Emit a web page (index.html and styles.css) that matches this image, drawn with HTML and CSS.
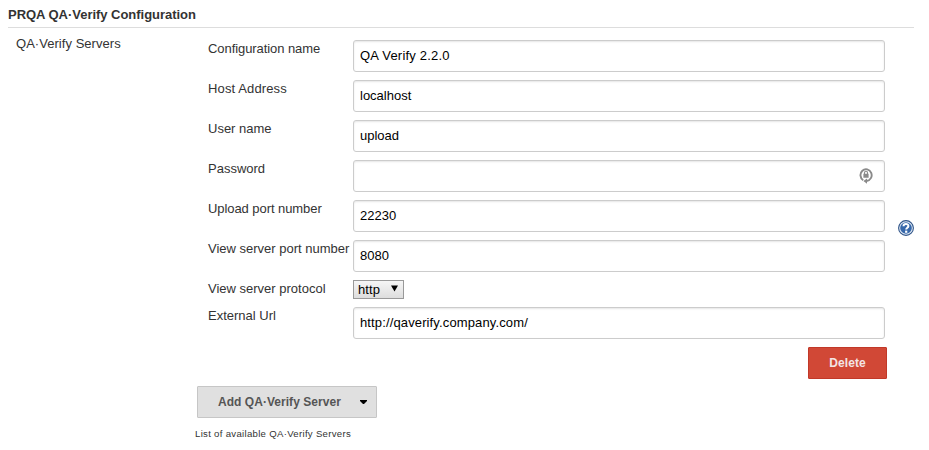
FILE: index.html
```html
<!DOCTYPE html>
<html lang="en">
<head>
<meta charset="utf-8">
<title>PRQA QA·Verify Configuration</title>
<link rel="stylesheet" href="styles.css">
</head>
<body>
<main class="section">
  <h1 class="section-title">PRQA QA·Verify Configuration</h1>
  <div class="section-body">
    <div class="section-label">QA·Verify Servers</div>
    <div class="content">
      <div class="server">
        <form class="fields">
          <label class="row"><span class="name tight">Configuration name</span><input class="field loose" type="text" value="QA Verify 2.2.0"></label>
          <label class="row"><span class="name wide">Host Address</span><input class="field" type="text" value="localhost"></label>
          <label class="row"><span class="name">User name</span><input class="field" type="text" value="upload"></label>
          <label class="row"><span class="name">Password</span><span class="password"><input class="field" type="password">
            <svg class="lock" width="14" height="18" viewBox="0 0 14 18"><path d="M4.2 13.2A5.6 5.9 0 1 1 7.6 14" fill="none" stroke="#8a8a8a" stroke-width="1.9"/><path d="M5.5 7V5.8a1.5 1.5 0 0 1 3 0V7" fill="none" stroke="#8a8a8a" stroke-width="1.1"/><path d="M4.4 6.8h5.2v4H4.4zM8 11.4v5.4l-3.6-2.7z" fill="#8a8a8a"/></svg></span></label>
          <label class="row"><span class="name tight">Upload port number</span><input class="field" type="text" value="22230"></label>
          <label class="row"><span class="name">View server port number</span><input class="field" type="text" value="8080"></label>
          <label class="row row-short"><span class="name">View server protocol</span><span class="select">http<svg width="7" height="7" viewBox="0 0 7 7"><path d="M0 .5h7L3.5 6.5z"/></svg></span></label>
          <label class="row"><span class="name">External Url</span><input class="field wide" type="text" value="http://qaverify.company.com/"></label>
          <button class="delete" type="button">Delete</button>
        </form>
        <svg class="help" width="16" height="16" viewBox="0 0 16 16"><circle cx="8" cy="8" r="7.4" fill="#e4ecf6" stroke="#2f5488" stroke-width="1.1"/><circle cx="8" cy="8" r="5.8" fill="#3768aa"/><path d="M5.5 6.2C5.5 3.2 10.5 3.2 10.4 6.1 10.3 7.7 8.2 7.7 8.2 9.6" fill="none" stroke="#fff" stroke-width="2"/><path d="M7.1 10.6h2.2v2.2H7.1z" fill="#fff"/></svg>
      </div>
      <button class="add" type="button">Add QA·Verify Server<svg width="7" height="4" viewBox="0 0 7 4"><path d="M0 0h7v1L4 4H3L0 1z"/></svg></button>
      <p class="hint">List of available QA·Verify Servers</p>
    </div>
  </div>
</main>
</body>
</html>
```
FILE: styles.css
```css
* { box-sizing: border-box; }
body {
  margin: 0;
  background: #fff;
  color: #333;
  font: 13px/16px "Liberation Sans", Arial, sans-serif;
}
.section { padding: 7px 15px 0 8px; }
.section-title {
  margin: 0;
  height: 21px;
  border-bottom: 1px solid #ddd;
  font-size: 13px;
  line-height: 16px;
  letter-spacing: -.03px;
}
.section-body { display: flex; }
.section-label { width: 187px; padding: 8px 0 0 8px; letter-spacing: .04px; }
.content { flex: 1; }
.server { display: flex; align-items: center; justify-content: space-between; height: 351px; padding: 12px 0 0 13px; }
.fields { width: 679px; height: 339px; display: flex; flex-direction: column; }
.row { display: flex; height: 32px; margin-bottom: 8px; }
.row-short { height: 19px; }
.name { width: 145px; padding-top: 1px; white-space: nowrap; }
.field {
  width: 532px;
  height: 32px;
  padding: 0 6px 2px;
  border: 1px solid #ccc;
  border-radius: 3px;
  background: #fff;
  box-shadow: inset 0 1px 2px rgba(0, 0, 0, .1);
  color: #000;
  font: 13px "Liberation Sans", Arial, sans-serif;
}
.tight { letter-spacing: -.07px; }
.wide { letter-spacing: .13px; }
.loose { letter-spacing: .2px; }
.password { position: relative; }
.lock { position: absolute; top: 7px; right: 12px; }
.select {
  display: flex;
  align-items: center;
  justify-content: space-between;
  width: 51px;
  height: 19px;
  padding: 1px 5px 0 4px;
  border: 1px solid #999;
  background: linear-gradient(#f6f6f6, #ddd);
  color: #000;
  letter-spacing: .1px;
}
.select svg { margin-bottom: 3px; }
.delete, .add {
  height: 32px;
  padding: 0;
  border-radius: 1px;
  font: bold 12px "Liberation Sans", Arial, sans-serif;
}
.delete {
  width: 79px;
  align-self: flex-end;
  flex-shrink: 0;
  border: 1px solid #c13828;
  background: #d14836;
  color: #f3e4e4;
  letter-spacing: .1px;
}
.add {
  display: flex;
  align-items: center;
  justify-content: space-between;
  width: 180px;
  margin: 7px 0 0 2px;
  padding: 0 9px 0 20px;
  border: 1px solid #c6c6c6;
  background: #e0e0e0;
  color: #555;
  letter-spacing: .04px;
}
.hint { margin: 10px 0 0; font-size: 9.6px; line-height: 12px; letter-spacing: .3px; }
.help { margin-top: 36px; }
```
